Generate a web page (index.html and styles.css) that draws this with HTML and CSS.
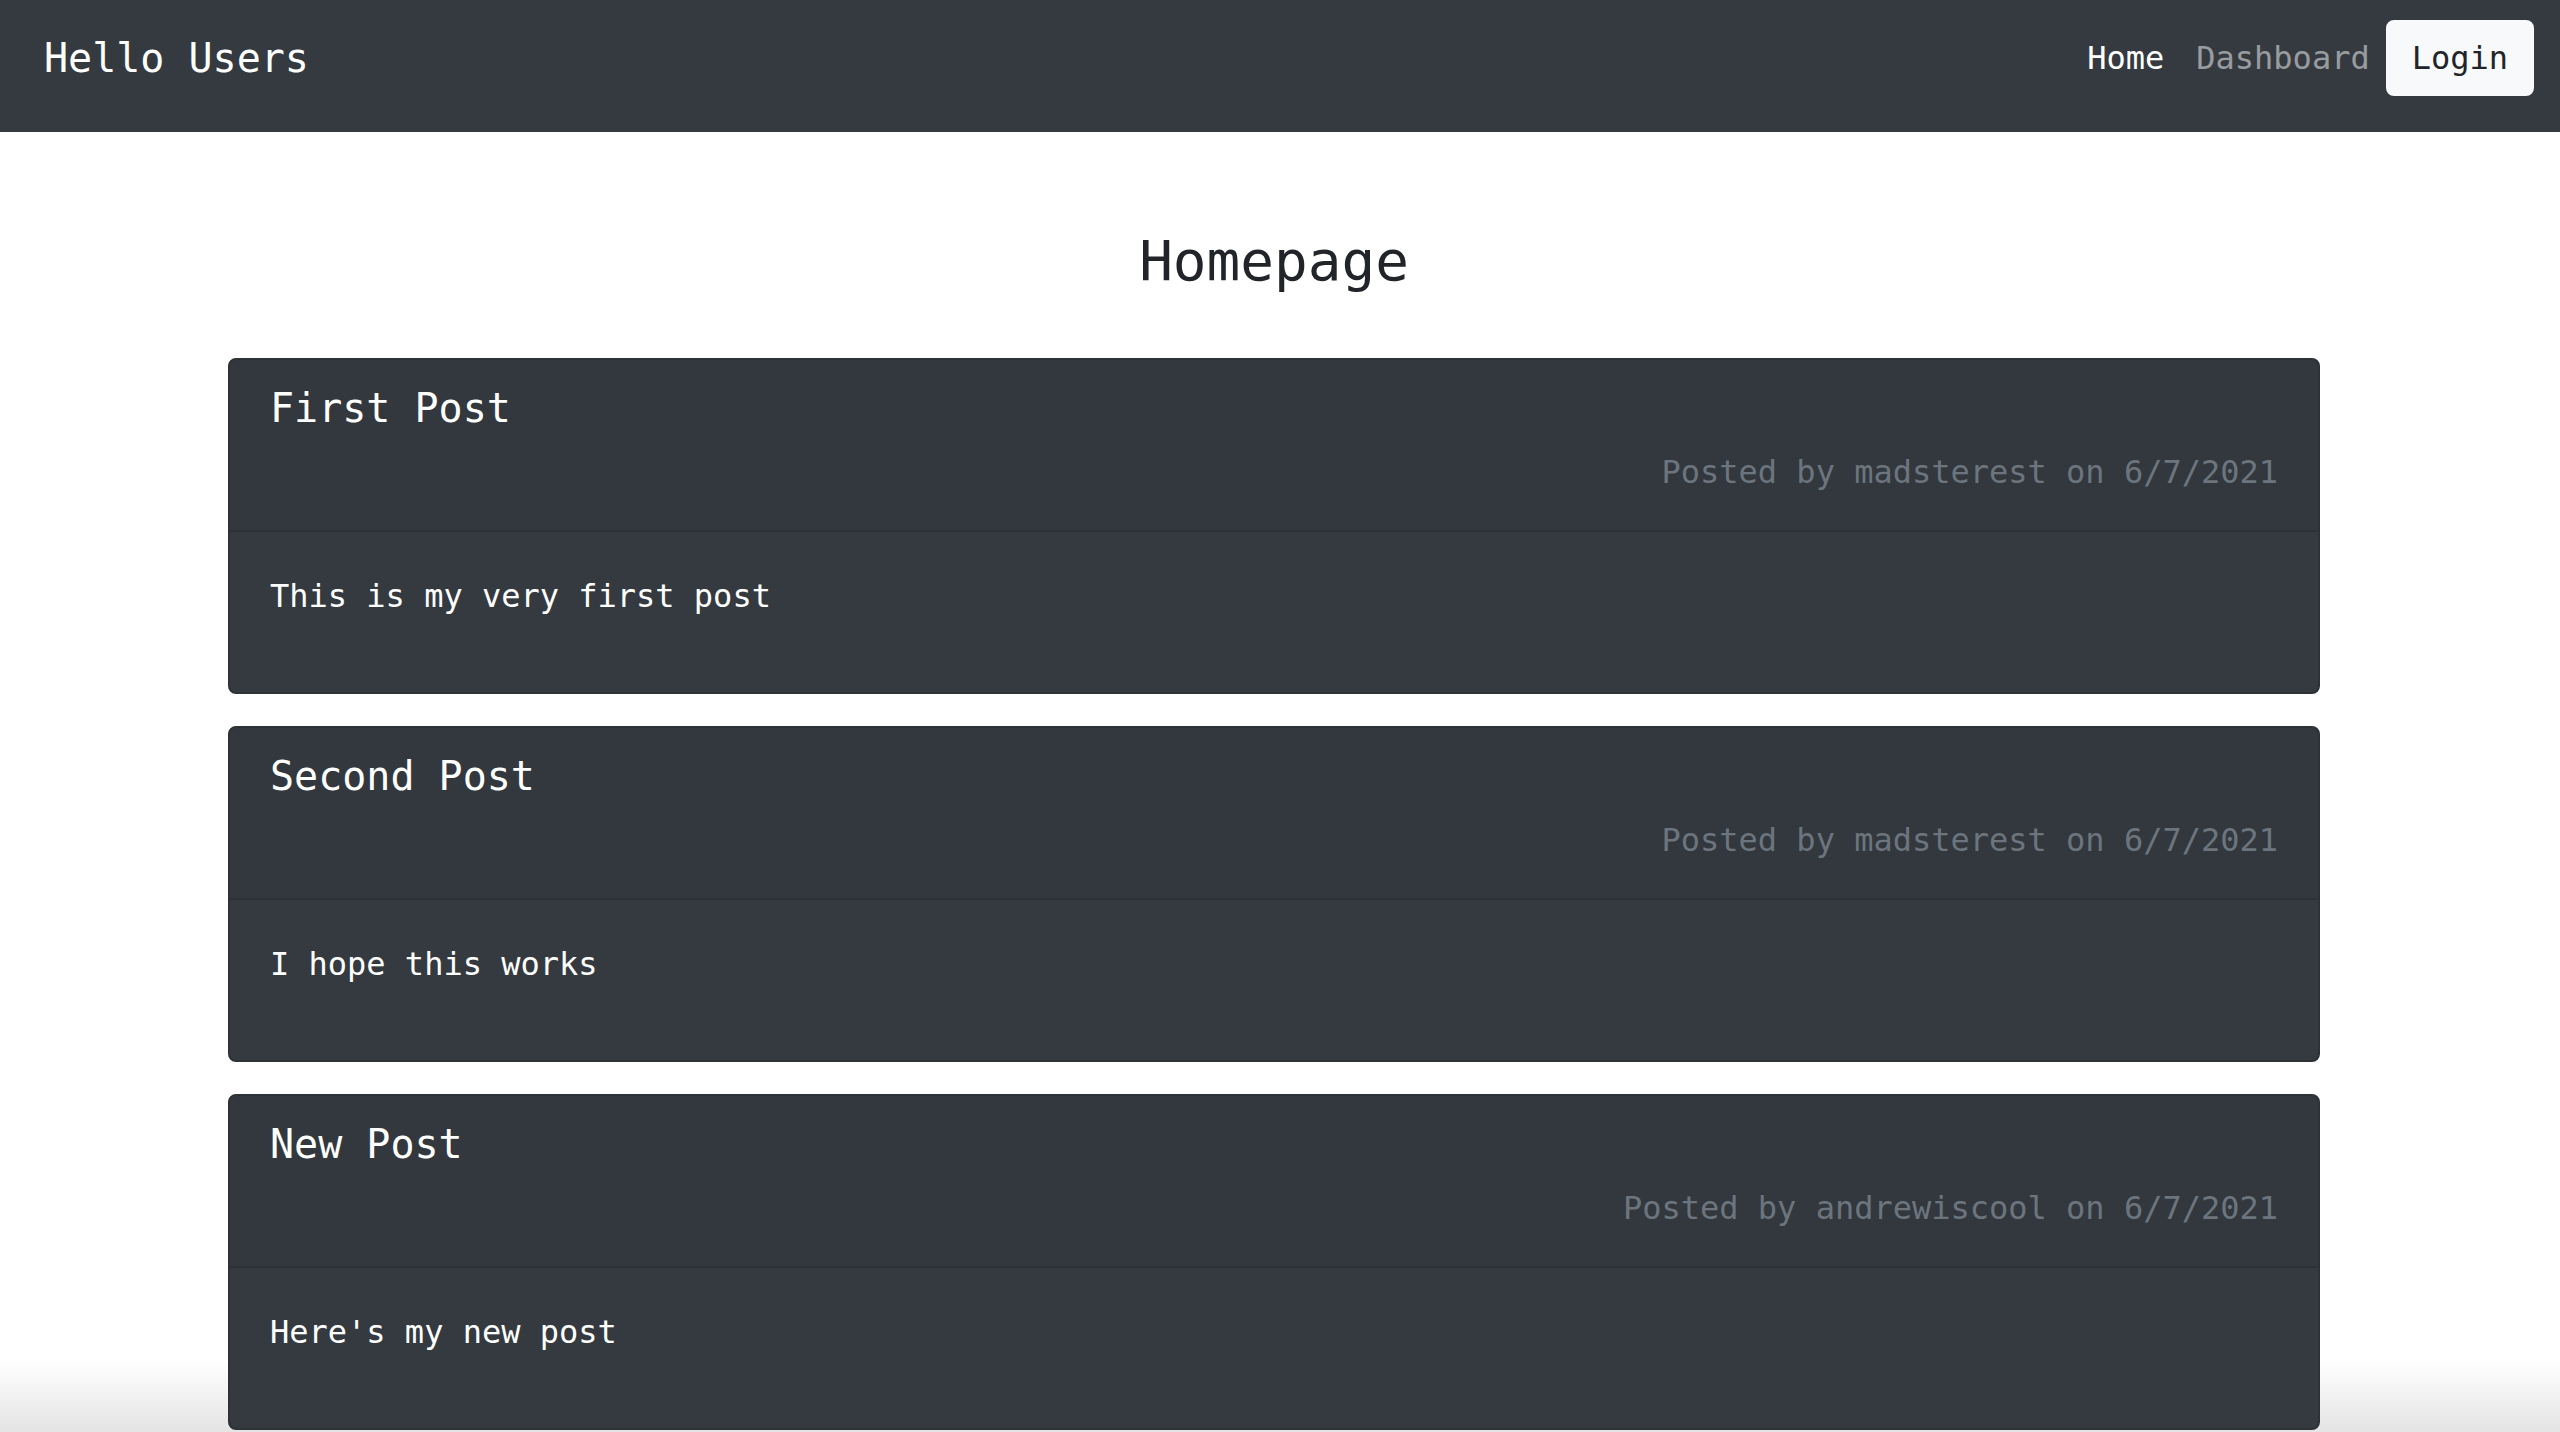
FILE: index.html
```html
<!DOCTYPE html>
<html lang="en">
<head>
<meta charset="utf-8">
<title>Hello Users</title>
<link rel="stylesheet" href="styles.css">
</head>
<body>
<nav class="navbar">
  <a class="brand" href="#">Hello Users</a>
  <div class="nav-items">
    <a class="nav-link active" href="#">Home</a>
    <a class="nav-link" href="#">Dashboard</a>
    <button class="btn-login">Login</button>
  </div>
</nav>
<div class="page">
  <main class="container">
    <h3 class="page-title">Homepage</h3>

    <div class="card">
      <div class="card-header">
        <h5 class="card-title">First Post</h5>
        <p class="meta">Posted by madsterest on 6/7/2021</p>
      </div>
      <div class="card-body">
        <p class="card-text">This is my very first post</p>
      </div>
    </div>

    <div class="card">
      <div class="card-header">
        <h5 class="card-title">Second Post</h5>
        <p class="meta">Posted by madsterest on 6/7/2021</p>
      </div>
      <div class="card-body">
        <p class="card-text">I hope this works</p>
      </div>
    </div>

    <div class="card">
      <div class="card-header">
        <h5 class="card-title">New Post</h5>
        <p class="meta">Posted by andrewiscool on 6/7/2021</p>
      </div>
      <div class="card-body">
        <p class="card-text">Here's my new post</p>
      </div>
    </div>
  </main>
</div>
</body>
</html>
```

FILE: styles.css
```css
html {
  height: 100%;
  background: linear-gradient(to bottom, #ffffff 0, #ffffff 1360px, #e4e4e4 1432px) no-repeat;
  background-size: 100% 1432px;
}

body {
  margin: 0;
  font-family: "DejaVu Sans Mono", "Liberation Mono", monospace;
  font-size: 32px;
  line-height: 1.5;
  color: #212529;
}

.navbar {
  box-sizing: border-box;
  height: 132px;
  display: flex;
  align-items: center;
  padding: 0 26px 16px 44px;
  background: #343a40;
}

.brand {
  margin-right: auto;
  font-size: 40px;
  line-height: 60px;
  color: #ffffff;
  text-decoration: none;
}

.nav-items {
  display: flex;
  align-items: center;
}

.nav-link {
  padding: 0 16px;
  line-height: 48px;
  color: rgba(255, 255, 255, 0.5);
  text-decoration: none;
}

.nav-link.active {
  color: #ffffff;
}

.btn-login {
  padding: 12px 24px;
  font: inherit;
  line-height: 48px;
  color: #212529;
  background: #f8f9fa;
  border: 2px solid #f8f9fa;
  border-radius: 8px;
}

.page {
  padding-right: 12px;
}

.container {
  max-width: 2092px;
  margin: 0 auto;
}

.page-title {
  margin: 95px 0 64px;
  font-size: 56px;
  font-weight: normal;
  line-height: 1.2;
  text-align: center;
  color: #212529;
}

.card {
  margin-bottom: 32px;
  background: #343a40;
  color: #ffffff;
  border: 2px solid #2d3237;
  border-radius: 8px;
  overflow: hidden;
}

.card-header {
  padding: 24px 40px 24px;
  background: rgba(0, 0, 0, 0.03);
  border-bottom: 2px solid #2d3237;
}

.card-title {
  margin: 0 0 16px;
  font-size: 40px;
  font-weight: normal;
  line-height: 1.2;
}

.meta {
  margin: 0 0 10px;
  text-align: right;
  color: #6c757d;
}

.card-body {
  padding: 40px;
}

.card-text {
  margin: 0 0 32px;
}
```
